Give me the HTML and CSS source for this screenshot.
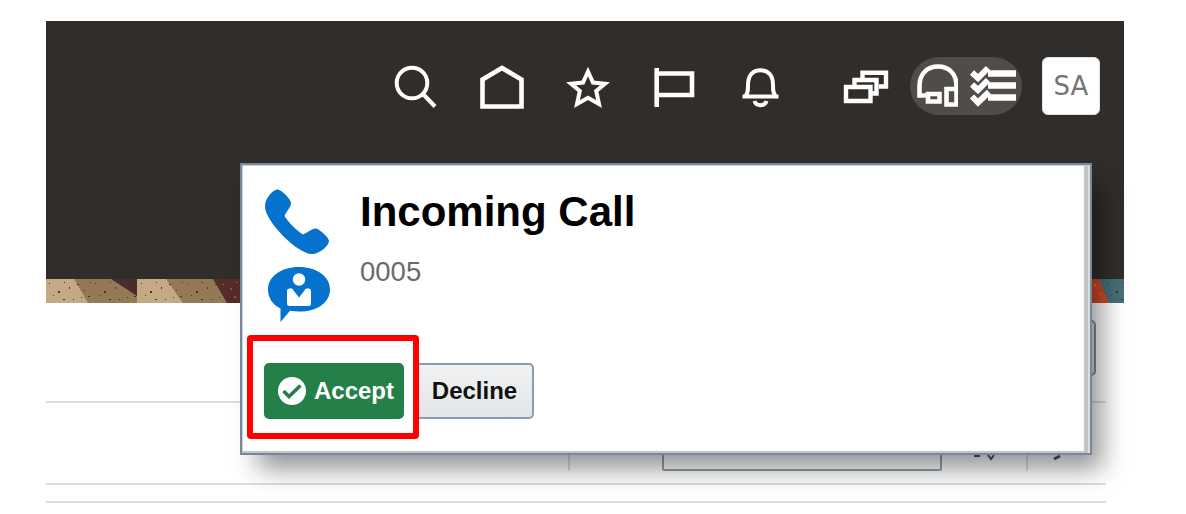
FILE: index.html
```
<!DOCTYPE html>
<html lang="en">
<head>
  <meta charset="UTF-8">
  <title>Incoming Call</title>
  <link rel="stylesheet" href="styles.css">
</head>
<body>

  <div class="app">
    <!-- Header -->
    <header class="header">
      <svg class="icon" viewBox="0 0 48 58"><circle cx="21" cy="26" r="15.3"/><path d="M32 37 44 49.500"/></svg>
      <svg class="icon" viewBox="0 0 48 58"><path d="M5.500 22.500 25 11 44.500 22.500V49.500H5.500Z" stroke-width="4.600"/></svg>
      <svg class="icon" viewBox="0 0 48 58"><path d="M25 14.500 30 25.500 42 26.700 33.200 34 36 47 25 40.800 14 47 16.800 34 8 26.700 20 25.500Z"/></svg>
      <svg class="icon" viewBox="0 0 48 58"><path d="M7.700 11V50M7.700 16.500H43V38H7.700" stroke-width="4.600"/></svg>
      <svg class="icon" viewBox="0 0 48 58"><path d="M10.500 39.500C13 37 13 34 13 28 13 18 18 13 25.500 13S38 18 38 28C38 34 38 37 40.500 39.500Z" stroke="none"/><path d="M10.500 38.500C13 36.500 13 33 13 28 13 18 18 13.200 25.500 13.200S38 18 38 28C38 33 38 36.500 40.500 38.500M7.500 39.500H43.500"/><path d="M19.500 44C21 49.500 30 49.500 31.500 44"/></svg>
      <svg class="icon icon-windows" viewBox="0 0 48 58"><path d="M20.500 22V15.800H44V29.500H37M12.500 30V23H34.500V36.500H29M4 30H28.500V44H4Z" stroke-width="4.400"/></svg>

      <div class="pill">
        <svg class="icon" viewBox="0 0 48 58"><path d="M18 38.500H9.500V29C9.500 17 17 9.500 28 9.500S46.500 17 46.500 29V47.500H36.500V32H46M18 37H29.500V44.500H18Z" stroke-width="4.600"/></svg>
        <svg class="icon" viewBox="0 0 48 58"><path d="M19 16.500H47M19 28.500H47M19 40.500H47" stroke-width="6.500"/><path d="M3 15.500 9 21 19 11M3 27.500 9 33 19 23M3 39.500 9 45.500 20 35" stroke-width="6"/></svg>
      </div>
      <div class="avatar">SA</div>
    </header>

    <!-- Decorative strip -->
    <svg class="strip" viewBox="0 0 1078 24">
      <defs>
        <pattern id="specks" width="46" height="24" patternUnits="userSpaceOnUse">
          <path d="M3 4h1v1H3zM12 12h2v2h-2zM18 3h1v1h-1zM7 16h1v1H7zM23 8h1v2h-1zM31 5h2v1h-2zM27 20h1v1h-1zM38 11h1v1h-1zM42 17h2v1h-2zM17 20h2v1h-2zM35 18h1v1h-1zM44 3h1v1h-1z" fill="#4b3032"/>
        </pattern>
      </defs>
      <rect width="1078" height="24" fill="#937a55"/>
      <path d="M0 0H28L42 24H0ZM91 0H120L137 24H91Z" fill="#c4aa84"/>
      <path d="M65 0H91V17Z" fill="#4b2c2d"/>
      <rect width="180" height="24" fill="url(#specks)"/>
      <path d="M167 0H240V24H181Z" fill="#542d29"/>
      <path d="M176 5h2v1h-2zM184 9h2v2h-2zM190 3h2v1h-2zM188 17h2v2h-2z" fill="#a84d2b"/>
      <path d="M1000 0H1054L1063 24H1000Z" fill="#d04a2a"/>
      <path d="M1053 0H1078V24H1063Z" fill="#477078"/>
      <path d="M1048 5h2v2h-2zM1054 14h1v2h-1z" fill="#e18d3c"/>
      <rect x="1061" width="17" height="24" fill="url(#specks)"/>
    </svg>

    <!-- Page behind the popup -->
    <main class="content">
      <div class="row row-top"><div class="back-button"></div></div>
      <div class="row row-filter">
        <div class="cell cell-left"></div>
        <div class="cell cell-field"><div class="field"></div>
          <svg class="field-icon" viewBox="0 0 24 24"><path d="M2 18h6M16 17l3 4 3-4"/></svg>
        </div>
        <div class="cell-end"><svg class="field-icon" viewBox="0 0 24 24"><path d="M2 20l6-3" stroke-width="3"/></svg></div>
      </div>
      <div class="row row-bottom"></div>
    </main>
  </div>

  <!-- Call notification -->
  <div class="popup">
    <div class="caller">
      <div class="caller-icons">
        <svg class="phone" viewBox="0 0 66 66"><path d="M13.500 .5C10 .5 1 8 1 17.500 1 32 33 65 48 65 56 65 65 56.500 65 52 65 48.500 55 39.500 51.500 39.500 48 39.500 43 44 39 45.500 32 41 24 33 20.500 27 22 23 27 18 27 14 27 10 17 .5 13.500 .5Z"/></svg>
        <svg class="chat" viewBox="0 0 62 55"><path d="M31 0C13 0 0 9.500 0 22.500 0 31 5 38 12.500 41.500V55L22 43.800C44 47.500 62 38 62 22.500 62 9.500 49 0 31 0Z"/><circle cx="31" cy="12.500" r="6.200" fill="#fff"/><path d="M21.500 21.500H24L31 30.500 38 21.500H40.500Q43 21.500 43 24V36.500Q43 39 40.500 39H21.500Q19 39 19 36.500V24Q19 21.500 21.500 21.500Z" fill="#fff"/></svg>
      </div>
      <div>
        <h1 class="title">Incoming Call</h1>
        <p class="number">0005</p>
      </div>
    </div>
    <div class="actions">
      <button class="button accept">
        <svg class="check" viewBox="0 0 28 28"><circle cx="14" cy="14" r="14" fill="#fff"/><path d="M5.500 14 11 19.500 22.500 8.500" fill="none" stroke="#257f49" stroke-width="3.500"/></svg>
        Accept
      </button>
      <button class="button decline">Decline</button>
    </div>
  </div>
  <div class="highlight"></div>

</body>
</html>
```
FILE: styles.css
```
* {
  box-sizing: border-box;
}

body {
  margin: 0;
  height: 514px;
  overflow: hidden;
  background: #fff;
  font-family: "Liberation Sans", Arial, sans-serif;
}

.app {
  width: 1124px;
  padding: 21px 0 0 46px;
}

.header {
  display: flex;
  justify-content: flex-end;
  gap: 38px;
  height: 258px;
  padding: 36px 24px 0 0;
  background: #312d2a;
}

.icon {
  flex: none;
  width: 48px;
  height: 58px;
  fill: none;
  stroke: #fff;
  stroke-width: 4;
}

.icon-windows {
  margin-left: 21px;
}

.pill {
  display: flex;
  gap: 8px;
  width: 112px;
  height: 58px;
  margin-left: -18px;
  padding-right: 5px;
  border-radius: 29px;
  background: #504c49;
}

.pill .icon:last-child {
  margin-left: 3px;
}

.avatar {
  width: 58px;
  height: 58px;
  margin-left: -18px;
  border: 1px solid #dce3e9;
  border-radius: 6px;
  background: #fff;
  color: #757575;
  font: 26px/57px "DejaVu Sans", sans-serif;
  text-align: center;
}

.strip {
  display: block;
  width: 1078px;
  height: 24px;
}

.content {
  width: 1060px;
}

.row {
  display: flex;
  border-bottom: 2px solid #d5e0e7;
}

.row-top {
  justify-content: flex-end;
  height: 100px;
  padding: 17px 10px 0 0;
}

.back-button {
  width: 60px;
  height: 56px;
  border: 2px solid #7f93a5;
  border-radius: 5px;
  background: #e4e8ea;
}

.row-filter {
  height: 82px;
}

.cell {
  height: 68px;
  border-right: 2px solid #d5e0e7;
}

.cell-left {
  width: 524px;
}

.cell-field {
  display: flex;
  align-items: flex-end;
  gap: 30px;
  width: 458px;
  padding-left: 92px;
}

.field {
  width: 280px;
  height: 56px;
  border: 2px solid #8fa3b0;
  border-radius: 2px;
}

.field-icon {
  width: 24px;
  height: 24px;
  margin-bottom: 9px;
  fill: none;
  stroke: #555;
  stroke-width: 2;
}

.cell-end {
  padding: 36px 0 0 24px;
}

.row-bottom {
  height: 18px;
}

.popup {
  position: absolute;
  left: 240px;
  top: 163px;
  width: 852px;
  height: 292px;
  padding: 24px 22px;
  border: 2px solid #74899e;
  background: #fff;
  box-shadow: inset 1px 1px 1px #ccc, inset -2px 0 0 #ddd, inset -6px -2px 1px #c3c3c3, 14px 18px 24px -4px rgba(0, 0, 0, 0.42);
}

.caller {
  display: flex;
  gap: 30px;
  height: 174px;
}

.caller-icons {
  display: flex;
  flex-direction: column;
  align-items: flex-end;
  gap: 12px;
  width: 66px;
  fill: #0572ce;
}

.phone {
  width: 66px;
  height: 66px;
}

.chat {
  width: 62px;
  height: 55px;
}

.title {
  margin: -1px 0 0;
  color: #000;
  font-size: 42px;
  line-height: 48px;
}

.number {
  margin: 20px 0 0;
  color: #6b6b6b;
  font-size: 27.500px;
  line-height: 32px;
}

.actions {
  display: flex;
  gap: 11px;
}

.button {
  display: flex;
  align-items: center;
  justify-content: center;
  height: 56px;
  margin: 0;
  padding: 0;
  border: 2px solid #8b9eb0;
  border-radius: 5px;
  font: bold 24px "Liberation Sans", Arial, sans-serif;
}

.accept {
  gap: 8px;
  width: 140px;
  padding-left: 4px;
  border-color: #257f49;
  background: #257f49;
  color: #fff;
}

.decline {
  width: 119px;
  background: linear-gradient(#f1f2f3, #e2e5e7);
  color: #111;
}

.check {
  width: 28px;
  height: 28px;
}

/* Frame around the accept button */
.highlight {
  position: absolute;
  left: 247px;
  top: 335px;
  width: 172px;
  height: 104px;
  border: 6px solid #f00;
  border-radius: 4px;
}
```
